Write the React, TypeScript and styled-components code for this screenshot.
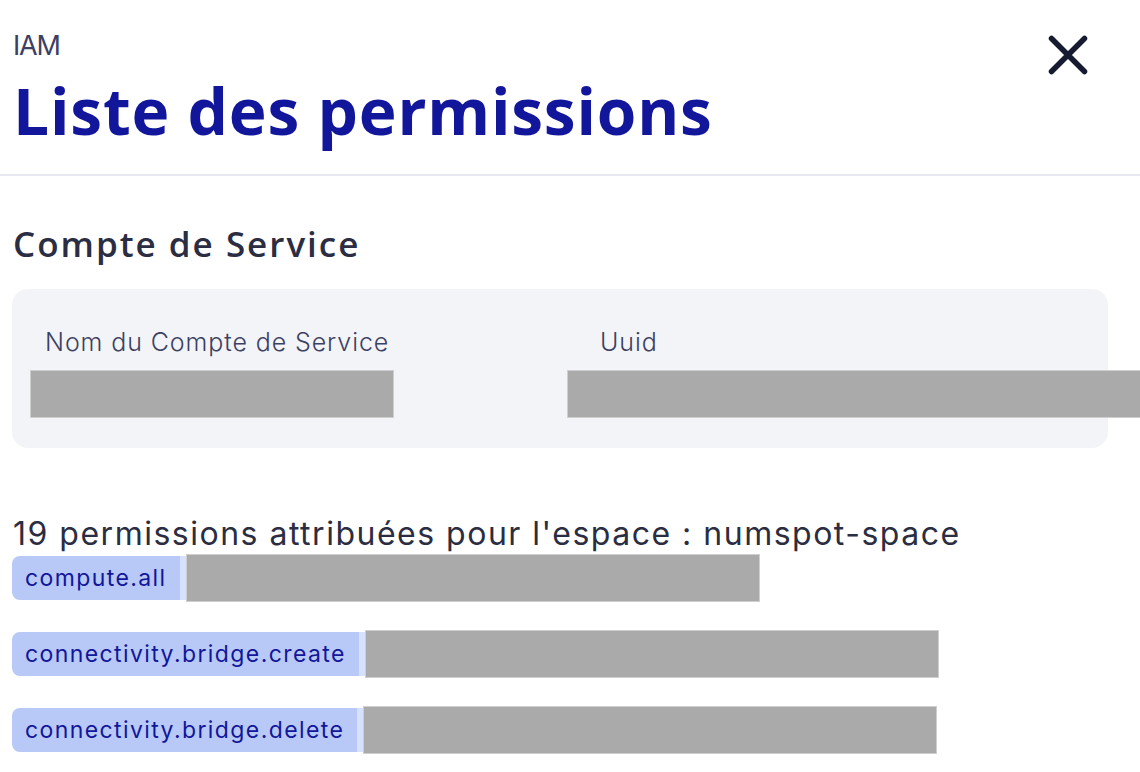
import React from 'react';
import styled, { createGlobalStyle } from 'styled-components';

const GlobalStyle = createGlobalStyle`
  html, body {
    margin: 0;
    padding: 0;
    background: #ffffff;
    overflow: hidden;
  }
  body {
    font-family: Inter, "Noto Sans", sans-serif;
    color: #2b2d42;
  }
`;

interface Permission {
    name: string;
    valueWidth: number;
}

const permissions: Permission[] = [
    { name: 'compute.all', valueWidth: 572 },
    { name: 'connectivity.bridge.create', valueWidth: 572 },
    { name: 'connectivity.bridge.delete', valueWidth: 572 },
];

const CloseIcon: React.FC = () => (
    <svg width="40" height="40" viewBox="0 0 40 40" fill="none">
        <path d="M3.5 3.5 L36.5 36.5 M36.5 3.5 L3.5 36.5" stroke="#171b31" strokeWidth="5.5" strokeLinecap="round" />
    </svg>
);

const App: React.FC = () => (
    <Page>
        <GlobalStyle />
        <Header>
            <HeaderText>
                <Eyebrow>IAM</Eyebrow>
                <Title>Liste des permissions</Title>
            </HeaderText>
            <CloseButton aria-label="Fermer">
                <CloseIcon />
            </CloseButton>
        </Header>
        <Content>
            <SectionTitle>Compte de Service</SectionTitle>
            <InfoCard>
                <Field>
                    <FieldLabel $indent={33}>Nom du Compte de Service</FieldLabel>
                    <Redaction $width={362} $offset={18} />
                </Field>
                <Field>
                    <FieldLabel $indent={33}>Uuid</FieldLabel>
                    <Redaction $width={620} $offset={0} />
                </Field>
            </InfoCard>
            <PermissionsTitle>19 permissions attribuées pour l'espace : numspot-space</PermissionsTitle>
            <PermissionList>
                {permissions.map((p) => (
                    <PermissionRow key={p.name}>
                        <Tag>{p.name}</Tag>
                        <TagValue>
                            <Redaction $width={p.valueWidth} $offset={0} $inline />
                        </TagValue>
                    </PermissionRow>
                ))}
            </PermissionList>
        </Content>
    </Page>
);

export default App;

const Page = styled.div`
    width: 1140px;
    min-height: 772px;
`;

const Header = styled.header`
    display: flex;
    justify-content: space-between;
    align-items: flex-start;
    padding: 31px 52px 28px 13px;
    border-bottom: 2px solid #e7e8f2;
`;

const HeaderText = styled.div`
    display: flex;
    flex-direction: column;
`;

const Eyebrow = styled.span`
    font-size: 27px;
    line-height: 30px;
    letter-spacing: -1.2px;
    color: #3c4063;
`;

const Title = styled.h1`
    margin: 15px 0 0;
    font-family: "Open Sans", "Noto Sans", sans-serif;
    font-weight: 700;
    font-size: 64px;
    line-height: 70px;
    letter-spacing: 0.8px;
    color: #12169a;
`;

const CloseButton = styled.button`
    margin-top: 4px;
    padding: 0;
    border: none;
    background: none;
    display: flex;
    cursor: pointer;
`;

const Content = styled.main`
    padding: 0 32px 0 12px;
`;

const SectionTitle = styled.h2`
    margin: 46px 0 0 1px;
    font-family: "Open Sans", "Noto Sans", sans-serif;
    font-weight: 600;
    font-size: 35px;
    line-height: 44px;
    letter-spacing: 2px;
    color: #2b2d42;
`;

const InfoCard = styled.section`
    margin-top: 23px;
    display: grid;
    grid-template-columns: 555px 1fr;
    padding: 38px 0 30px;
    background: #f3f4f8;
    border-radius: 16px;
`;

const Field = styled.div`
    display: flex;
    flex-direction: column;
    gap: 13px;
`;

const FieldLabel = styled.span<{ $indent: number }>`
    padding-left: ${({ $indent }) => $indent}px;
    font-size: 25px;
    font-weight: 300;
    line-height: 30px;
    letter-spacing: 0.9px;
    color: #3c4063;
    white-space: nowrap;
`;

const Redaction = styled.div<{ $width: number; $offset: number; $inline?: boolean }>`
    flex: none;
    width: ${({ $width }) => $width}px;
    height: 46px;
    margin-left: ${({ $offset }) => $offset}px;
    background: #aaaaaa;
    border: 1px solid #cfcfcf;
    ${({ $inline }) => $inline && 'margin-top: -2px; margin-bottom: -2px;'}
`;

const PermissionsTitle = styled.h3`
    margin: 66px 0 0 1px;
    font-size: 32px;
    line-height: 40px;
    font-weight: 400;
    letter-spacing: 1.5px;
    color: #2b2d42;
    white-space: nowrap;
`;

const PermissionList = styled.ul`
    margin: 2px 0 0;
    padding: 0;
    list-style: none;
    display: flex;
    flex-direction: column;
    gap: 32px;
`;

const PermissionRow = styled.li`
    display: flex;
    align-items: center;
    height: 44px;
`;

const Tag = styled.span`
    height: 44px;
    display: flex;
    align-items: center;
    padding: 0 13px;
    background: #b8c9f8;
    color: #12169a;
    font-size: 23px;
    letter-spacing: 1.4px;
    border-radius: 8px 0 0 8px;
    white-space: nowrap;
`;

const TagValue = styled.span`
    display: flex;
    align-items: center;
    height: 44px;
    padding-left: 6px;
    background: #d6e1fd;
`;
